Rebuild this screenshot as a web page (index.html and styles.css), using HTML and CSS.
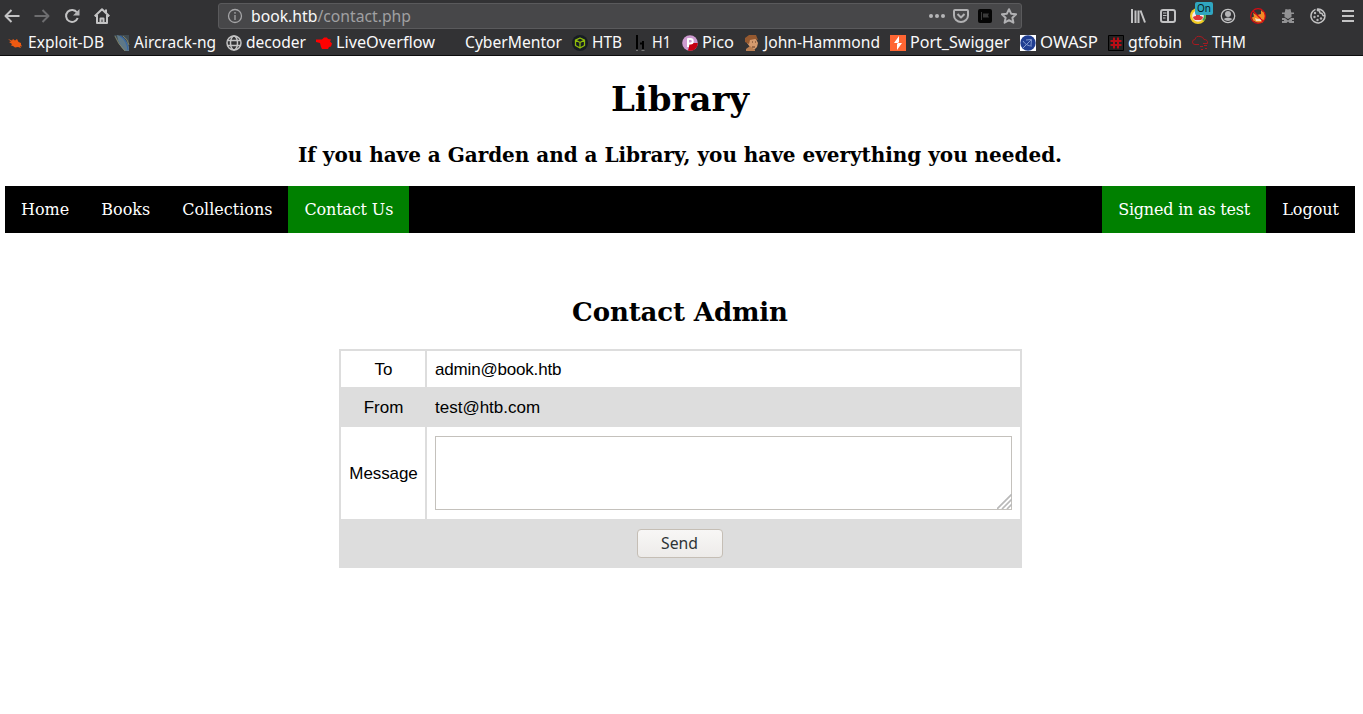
FILE: index.html
```html
<!DOCTYPE html>
<html lang="en">
<head>
<meta charset="utf-8">
<title>Library</title>
<link rel="stylesheet" href="styles.css">
</head>
<body>
<header class="chrome">
  <div class="toolbar">
    <div class="nav-icons">
      <svg class="ico" viewBox="0 0 16 16"><path d="M15.5 8H1.5M7.5 2 1.5 8l6 6"/></svg>
      <svg class="ico dim" viewBox="0 0 16 16"><path d="M.5 8h14M8.500 2l6 6-6 6"/></svg>
      <svg class="ico" viewBox="0 0 16 16"><path d="M13 4.500A6 6 0 1 0 13.700 10"/><path class="solid" d="M15.500 1v6.500H9z"/></svg>
      <svg class="ico" viewBox="0 0 16 16"><path d="M.7 8.300 8 1.300l7.300 7M3 7v8h10V7M12 1.500v3"/><path d="M6.500 15v-4.500h3V15"/></svg>
    </div>
    <div class="urlbar">
      <svg class="ico thin" viewBox="0 0 16 16"><circle cx="8" cy="8" r="6.500"/><path d="M8 7v5M8 4v1.700"/></svg>
      <svg class="label" width="162" height="24"><text x="0" y="18" textLength="160" lengthAdjust="spacingAndGlyphs">book.htb<tspan class="path">/contact.php</tspan></text></svg>
      <div class="url-actions">
        <svg class="ico" viewBox="0 0 16 16"><g class="solid"><circle cx="2" cy="8" r="2"/><circle cx="8" cy="8" r="2"/><circle cx="14" cy="8" r="2"/></g></svg>
        <svg class="ico" viewBox="0 0 16 16"><path d="M2 2h12q1 0 1 1v4.500a7 6.500 0 0 1-14 0V3q0-1 1-1zM4.500 6 8 9.500 11.500 6"/></svg>
        <svg class="ico" viewBox="0 0 16 16"><rect x="1" y="1" width="14" height="14" rx="2" fill="#050505" stroke="none"/><path d="M4 4h1v8H4zM6 5.500h6l-1 2 1 2H6z" fill="#3a3a3a" stroke="none"/></svg>
        <svg class="ico" viewBox="0 0 16 16"><path d="m8 1.200 2.100 4.500 5 .6-3.700 3.400 1 5L8 12.200l-4.400 2.500 1-5L.9 6.300l5-.6z"/></svg>
      </div>
    </div>
    <div class="tools">
      <svg class="ico" viewBox="0 0 16 16"><path d="M2 1v14M5.500 2.500V15M8.500 2.500V15M10.500 2.500 15 14.500"/></svg>
      <svg class="ico" viewBox="0 0 16 16"><rect x="1" y="2" width="14" height="12" rx="2"/><path d="M8 2v12"/><path stroke-width="1.200" d="M3 5h3.500M3 7.500h3.500M3 10h2.500"/></svg>
      <div class="badge-host">
        <svg class="ico" viewBox="0 0 16 16"><circle cx="8" cy="8" r="8" fill="#f3cd24" stroke="none"/><path d="M8 0a8 8 0 0 1 6 13L8 8z" fill="#3ba457" stroke="none"/><circle cx="8" cy="8" r="5.800" fill="#f5e8e8" stroke="none"/><path d="M3 10q0-2 3-2V5h4v3q3 0 3 2l-2 2H5z" fill="#dd3539" stroke="none"/></svg>
        <span class="badge">On</span>
      </div>
      <svg class="ico" viewBox="0 0 16 16"><circle cx="8" cy="8" r="6.700" stroke-width="1.300"/><g class="solid"><circle cx="8" cy="6" r="3"/><path d="M3.500 11q4.500-3 9 0-4.500 4-9 0z"/></g></svg>
      <svg class="ico" viewBox="0 0 16 16"><path d="M3 5l4 2 4-1 0-4 2 2 2 0v7l-3 4-5-.5-4-2-1-3 2-1z" fill="#f28a25" stroke="none"/><path d="m5 10 3 1 4-1-1 3H6z" fill="#f1d9bd" stroke="none"/><g stroke="#d60b12" stroke-width="1.200"><circle cx="8" cy="8" r="7.300"/><path d="m3 3 10 10"/></g></svg>
      <svg class="ico" viewBox="0 0 16 16"><g fill="#929294" stroke="none"><path d="m5.500 1 2.500.6 2.500-.6.8 3.500H14V6H2V4.500h2.700zM4.500 6h7v3L8 11 4.500 9z"/><path d="M2 10h3l3 2.500 3-2.500h3v2h-2v1h2v2H9.500L8 13.500 6.500 15H2v-2h2v-1H2z"/></g></svg>
      <svg class="ico" viewBox="0 0 16 16"><path stroke-width="1.500" d="M5.500 1.400A7 7 0 1 0 15 8M7.500 1a7 7 0 0 1 7.500 7l-2-.5-1-2-2-.5-.5-2-2-.5z"/><g class="solid"><circle cx="5" cy="5" r="1.200"/><circle cx="4.500" cy="9" r="1.200"/><circle cx="8" cy="8" r="1.100"/><circle cx="7.500" cy="12" r="1.200"/><circle cx="11" cy="10.500" r="1.200"/></g></svg>
      <svg class="ico" viewBox="0 0 16 16"><path d="M2 3h12M2 8h12M2 13h12"/></svg>
    </div>
  </div>
  <nav class="bookmarks">
    <a><svg class="ico" viewBox="0 0 16 16"><path d="m0 4 4 1.500L5 4l2 1.500L9 4l1.500 3 2.500 1v1.500l1 2-2-.5 1 2-3-1-3 .5L5 11l-2-.5L4 9 1 7l2-.5z" fill="#ee5a12" stroke="none"/></svg><svg class="label" width="78" height="22"><text y="16" textLength="76" lengthAdjust="spacingAndGlyphs">Exploit-DB</text></svg></a>
    <a><svg class="ico" viewBox="0 0 16 16"><path d="M0 0h15v16h-4Q3 9 0 0z" fill="#3f4b52" stroke="none"/><path d="M3 0q9 2 12 12v4h-4Q4 10 3 0z" fill="#5e7888" stroke="none"/><path d="M6 1q7 4 8 14" stroke="#3767a5" stroke-width="1.200"/><path d="M1 1q3 8 10 15M9 1q5 3 6 9" stroke="#918e69" stroke-width=".8"/></svg><svg class="label" width="84" height="22"><text y="16" textLength="82" lengthAdjust="spacingAndGlyphs">Aircrack-ng</text></svg></a>
    <a><svg class="ico" viewBox="0 0 16 16"><g stroke-width="1.500"><circle cx="8" cy="8" r="7"/><ellipse cx="8" cy="8" rx="3.500" ry="7"/><path d="M1.500 5.500h13M1.500 10.500h13"/></g></svg><svg class="label" width="62" height="22"><text y="16" textLength="60" lengthAdjust="spacingAndGlyphs">decoder</text></svg></a>
    <a><svg class="ico" viewBox="0 0 16 16"><path d="M0 4.500h6L8 2.500h3l1 1.500 3 .5-1 2 2 2-1 3-2 .5-1 2H6l-1-2-1-4-4-1z" fill="#f00" stroke="none"/></svg><svg class="label" width="101" height="22"><text y="16" textLength="99" lengthAdjust="spacingAndGlyphs">LiveOverflow</text></svg></a>
    <a><span class="ico"></span><svg class="label" width="99" height="22"><text y="16" textLength="97" lengthAdjust="spacingAndGlyphs">CyberMentor</text></svg></a>
    <a><svg class="ico" viewBox="0 0 16 16"><circle cx="8" cy="8" r="8" fill="#171d22" stroke="none"/><path d="m8 3 4.500 2.200v5.300L8 13l-4.500-2.500V5.200zM3.500 5.200 8 7.500l4.500-2.300M8 7.500V13" stroke="#8fbc0b" stroke-width="1.300"/></svg><svg class="label" width="32" height="22"><text y="16" textLength="30" lengthAdjust="spacingAndGlyphs">HTB</text></svg></a>
    <a><svg class="ico" viewBox="0 0 16 16"><path d="M5 0v14M8 8.500h3M11 6v8" stroke="#000" stroke-width="2"/><path d="M4 15.500h2M9.500 15.500h3" stroke="#777" stroke-width="1"/></svg><svg class="label" width="22" height="22"><text y="16" textLength="19" lengthAdjust="spacingAndGlyphs">H1</text></svg></a>
    <a><svg class="ico" viewBox="0 0 16 16"><circle cx="8" cy="8" r="7.800" fill="#ce9bd0" stroke="none"/><path d="M8 8h7.800A7.800 7.800 0 0 1 6 15.500z" fill="#c50010" stroke="none"/><path d="M6 12V4h2.500a2.200 2.200 0 0 1 0 4.500H6" stroke="#fff" stroke-width="2"/></svg><svg class="label" width="34" height="22"><text y="16" textLength="32" lengthAdjust="spacingAndGlyphs">Pico</text></svg></a>
    <a><svg class="ico" viewBox="0 0 16 16"><path d="M3 4h9l2 4-1 4-3 3-4-3-3-4z" fill="#d49a6e" stroke="none"/><path d="M1 7V3l4-3h7l2 5-3-1-5 1-1 4z" fill="#96592f" stroke="none"/><path d="m2 14 4-3 5 4v1H2z" fill="#b97e52" stroke="none"/><path d="M8 7h1M11 7h1M8 12h3" stroke="#603922" stroke-width="1"/></svg><svg class="label" width="118" height="22"><text y="16" textLength="116" lengthAdjust="spacingAndGlyphs">John-Hammond</text></svg></a>
    <a><svg class="ico" viewBox="0 0 16 16"><path fill="#ff6633" stroke="none" d="M0 0h16v16H0z"/><path d="M9 1 4 8h4l-1 1v6l5-7H8l1-1z" fill="#fff" stroke="none"/></svg><svg class="label" width="102" height="22"><text y="16" textLength="100" lengthAdjust="spacingAndGlyphs">Port_Swigger</text></svg></a>
    <a><svg class="ico" viewBox="0 0 16 16"><path fill="#fff" stroke="none" d="M0 0h16v16H0z"/><circle cx="8" cy="8" r="7.700" fill="#203e92" stroke="none"/><path d="m3 13 8-8M6 5l5.500-.5L11 10M3 6q3 5 9 5" stroke="#8199cf" stroke-width="1"/></svg><svg class="label" width="60" height="22"><text y="16" textLength="58" lengthAdjust="spacingAndGlyphs">OWASP</text></svg></a>
    <a><svg class="ico" viewBox="0 0 16 16"><rect x=".5" y=".5" width="15" height="15" fill="#222" stroke="#000" stroke-width="1"/><path d="M6 2.500v11M10 2.500v11M2.500 6h11M2.500 10h11" stroke="#b80d16" stroke-width="2"/></svg><svg class="label" width="56" height="22"><text y="16" textLength="54" lengthAdjust="spacingAndGlyphs">gtfobin</text></svg></a>
    <a><svg class="ico" viewBox="0 0 16 16"><path d="M7 9.500H3a2.500 2.500 0 0 1 0-5q1-4 5-3 3 0 4 3 4 0 3.500 4H11M8 11.500h3M12 10.500h3M9 14.500h2M13 13.500h2" stroke="#a61a21" stroke-width="1"/></svg><svg class="label" width="36" height="22"><text y="16" textLength="34" lengthAdjust="spacingAndGlyphs">THM</text></svg></a>
  </nav>
</header>
<main>
  <h1>Library</h1>
  <h3>If you have a Garden and a Library, you have everything you needed.</h3>
  <nav class="menu">
    <a>Home</a><a>Books</a><a>Collections</a><a class="active contact">Contact Us</a>
    <a class="active right">Signed in as test</a><a>Logout</a>
  </nav>
  <h2>Contact Admin</h2>
  <table>
    <tr class="line"><td class="key">To</td><td class="mail">admin@book.htb</td></tr>
    <tr class="line from"><td class="key">From</td><td>test@htb.com</td></tr>
    <tr class="message"><td class="key">Message</td><td><div class="field"><textarea></textarea><svg class="grip" viewBox="0 0 15 15"><path d="M0 15 15 0M5 15 15 5M10 15l5-5"/></svg></div></td></tr>
    <tr class="submit"><td colspan="2"><button><svg class="label" width="37" height="22"><text y="16" textLength="37" lengthAdjust="spacingAndGlyphs">Send</text></svg></button></td></tr>
  </table>
</main>
</body>
</html>
```
FILE: styles.css
```css
* { box-sizing: border-box; }
body { margin: 0; background: #fff; color: #000; font-family: "DejaVu Serif", serif; overflow: hidden; }
.chrome { height: 56px; background: #323234; border-bottom: 1px solid #0c0c0d; font-family: "Noto Sans", sans-serif; }
.toolbar { display: flex; height: 32px; align-items: center; padding-left: 4px; }
.ico { display: block; flex: none; width: 16px; height: 16px; fill: none; stroke: #c3c3c4; stroke-width: 2; stroke-linejoin: round; }
.ico .solid { fill: #b5b5b7; stroke: none; }
.ico.dim { stroke: #6d6d6f; }
.ico.thin { stroke: #a5a5a7; stroke-width: 1.3; }
.nav-icons { display: flex; gap: 14px; width: 214px; }
.urlbar { display: flex; align-items: center; width: 804px; height: 26px; padding: 0 4px 0 8px; border: 1px solid #5a5a5c; border-radius: 3px; background: #474749; }
.urlbar .label { margin-left: 8px; }
.url-actions { display: flex; gap: 8px; margin-left: auto; }
.url-actions .ico { stroke: #b1b1b3; }
.tools { display: flex; gap: 14px; margin-left: 108px; }
.badge-host { position: relative; }
.badge { position: absolute; left: 5px; top: -6px; width: 18px; height: 13px; border-radius: 2px; background: #30a6c0; color: #071b20; font: 10px/13px "Noto Sans", sans-serif; text-align: center; }
.label { display: block; flex: none; overflow: visible; fill: #f9f9fa; font: 16px "Noto Sans", sans-serif; }
.path { fill: #a0a0a2; }
.bookmarks { display: flex; height: 22px; align-items: center; gap: 8px; padding-left: 8px; }
.bookmarks a { display: flex; align-items: center; gap: 4px; }
.bookmarks .label { height: 22px; }
.bookmarks a .label text { transform: translateY(-0.5px); }
main { padding: 0 8px 0 5px; }
h1, h2, h3 { margin: 0; text-align: center; }
h1 { height: 86px; padding-top: 22px; font-size: 34px; line-height: 42px; }
h3 { height: 44px; font-size: 20px; line-height: 26px; letter-spacing: -0.03px; }
h2 { height: 116px; padding-top: 63px; font-size: 26px; line-height: 32px; letter-spacing: -0.12px; }
.menu { display: flex; height: 47px; background: #000; }
.menu a { padding: 14px 16px; color: #fff; font-size: 16px; line-height: 19px; white-space: nowrap; }
.menu .active { background: green; }
.menu .contact { width: 121px; letter-spacing: -0.15px; }
.menu .right { width: 164px; margin-left: auto; letter-spacing: -0.2px; }
table { width: 683px; margin: 0 0 0 334px; table-layout: fixed; border-collapse: separate; border-spacing: 2px; background: #ddd; font: 17px "Liberation Sans", sans-serif; }
td { padding: 0 8px; background: #fff; }
.line td { padding-top: 1px; }
.message .key { padding-top: 2px; letter-spacing: -0.1px; }
.key { width: 84px; padding: 0 6px 0 7px; text-align: center; }
.mail { letter-spacing: -0.18px; }
.line { height: 36px; }
.from td, .submit td { background: #ddd; }
.submit td { padding-right: 10px; }
.message { height: 92px; }
.submit { height: 45px; text-align: center; }
.field { position: relative; height: 74px; }
textarea { display: block; width: 577px; height: 74px; border: 1px solid #c4c1bc; background: #fff; resize: none; outline: none; }
.grip { position: absolute; right: 0; bottom: 1px; width: 15px; height: 15px; stroke: #b9b9b9; stroke-width: 1.7; }
button { display: inline-flex; justify-content: center; align-items: center; vertical-align: middle; width: 86px; height: 29px; border: 1px solid #c5beb5; border-radius: 4px; background: linear-gradient(#f8f7f6, #edebe9); }
button .label { fill: #2e3436; }
```
